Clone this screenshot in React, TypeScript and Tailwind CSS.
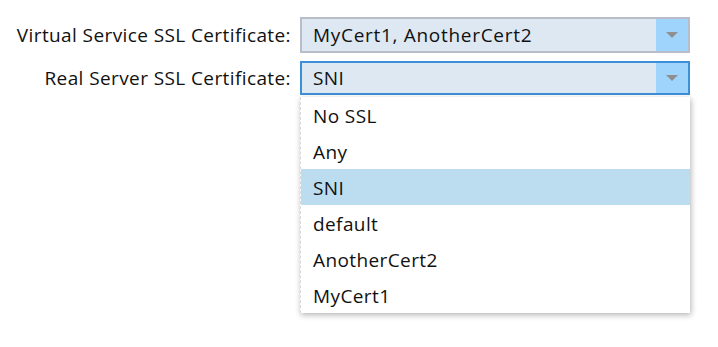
import { useState } from "react";

const options = ["No SSL", "Any", "SNI", "default", "AnotherCert2", "MyCert1"];

const Arrow = () => (
  <svg width="12" height="6" viewBox="0 0 12 6" className="block">
    <path d="M0 0 L12 0 L6 6 Z" fill="#8f8f8f" />
  </svg>
);

export default function App() {
  const [selected] = useState("SNI");

  return (
    <div
      className="w-[718px] h-[347px] bg-white text-[#111] text-[19px] tracking-[0.4px]"
      style={{ fontFamily: '"Open Sans", "Liberation Sans", sans-serif' }}
    >
      <div className="grid grid-cols-[300px_390px] pt-[17px] gap-y-[8px]">
        <div className="flex items-center justify-end pr-[9px] h-[36px]">Virtual Service SSL Certificate:</div>
        <div className="flex h-[36px] border-2 border-[#b9bdc9] bg-[#dde8f2]">
          <div className="flex-1 flex items-center pl-[11px] tracking-[0.7px]">MyCert1, AnotherCert2</div>
          <div className="w-[32px] bg-[#9fd4fc] flex items-center justify-center">
            <Arrow />
          </div>
        </div>

        <div className="flex items-center justify-end pr-[9px] h-[34px]">Real Server SSL Certificate:</div>
        <div className="relative">
          <div className="flex h-[34px] border-2 border-[#3d8fd8] bg-[#dde8f2]">
            <div className="flex-1 flex items-center pl-[11px]">{selected}</div>
            <div className="w-[32px] bg-[#9fd4fc] flex items-center justify-center">
              <Arrow />
            </div>
          </div>
          <ul className="absolute left-0 top-[36px] w-[390px] bg-white border-l border-dashed border-[#d8d8d8] shadow-[1px_2px_6px_rgba(0,0,0,0.3)]">
            {options.map((o) => (
              <li
                key={o}
                className={`h-[36px] flex items-center pl-[12px] pt-[2px] ${o === selected ? "bg-[#bcdcf0]" : ""}`}
              >
                {o}
              </li>
            ))}
          </ul>
        </div>
      </div>
    </div>
  );
}
